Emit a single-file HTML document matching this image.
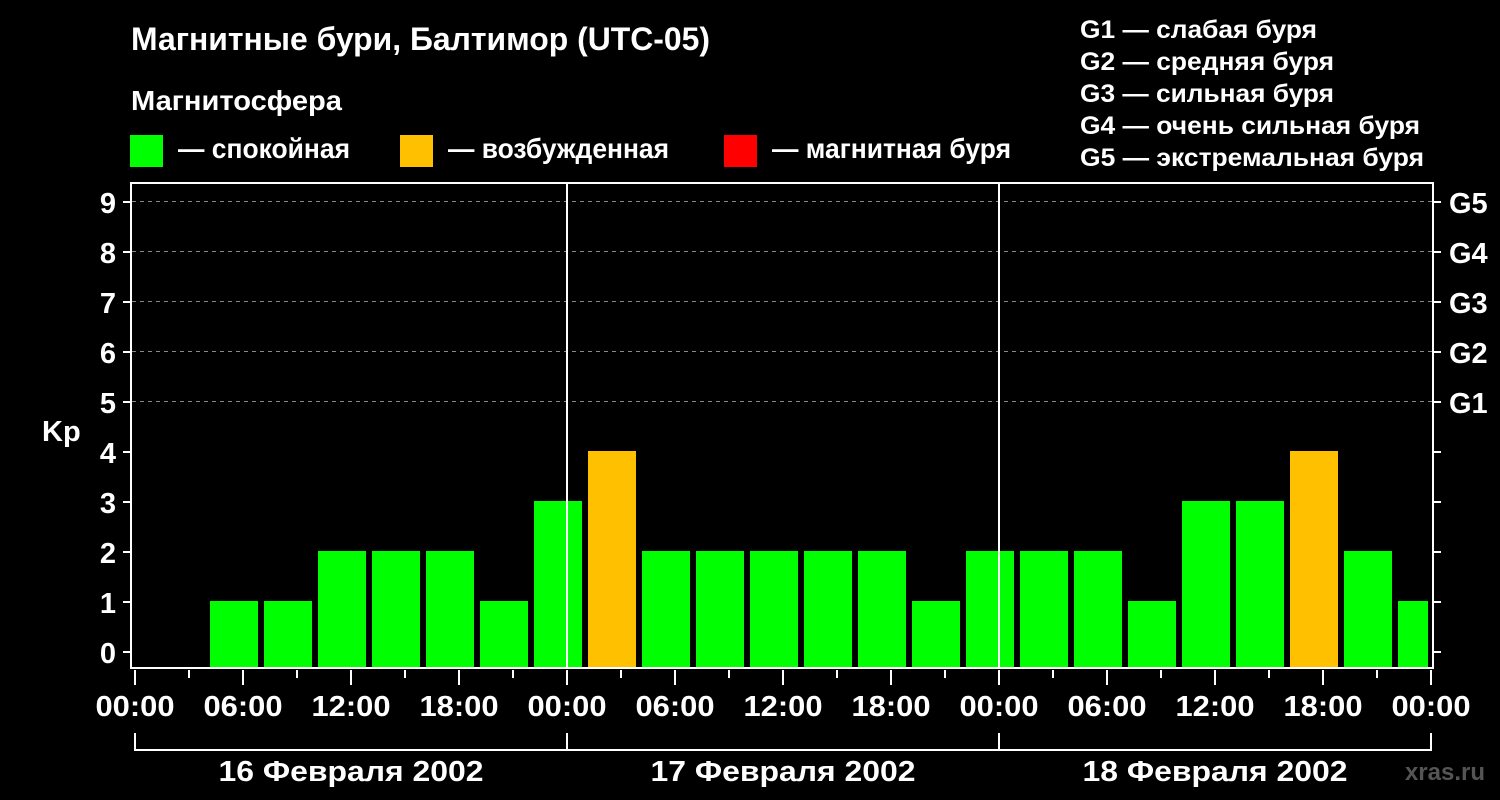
<!DOCTYPE html>
<html><head><meta charset="utf-8"><style>
html,body{margin:0;padding:0;background:#000;width:1500px;height:800px;overflow:hidden}
svg{display:block}
text{font-family:"Liberation Sans",Arial,sans-serif;font-weight:bold;fill:#fff}
</style></head><body>
<svg width="1500" height="800" viewBox="0 0 1500 800" xmlns="http://www.w3.org/2000/svg">
<rect width="1500" height="800" fill="#000"/>
<text x="131" y="50" font-size="32" textLength="579" lengthAdjust="spacingAndGlyphs">Магнитные бури, Балтимор (UTC-05)</text>
<text x="131" y="110" font-size="28" textLength="211" lengthAdjust="spacingAndGlyphs">Магнитосфера</text>
<rect x="130" y="135" width="33" height="32" fill="#00ff00"/>
<text x="178" y="158" font-size="28" textLength="172" lengthAdjust="spacingAndGlyphs">— спокойная</text>
<rect x="400" y="135" width="33" height="32" fill="#ffc000"/>
<text x="448" y="158" font-size="28" textLength="221" lengthAdjust="spacingAndGlyphs">— возбужденная</text>
<rect x="724" y="135" width="33" height="32" fill="#ff0000"/>
<text x="772" y="158" font-size="28" textLength="239" lengthAdjust="spacingAndGlyphs">— магнитная буря</text>
<g font-size="25">
<text x="1080" y="38" textLength="237" lengthAdjust="spacingAndGlyphs">G1 — слабая буря</text>
<text x="1080" y="70" textLength="254" lengthAdjust="spacingAndGlyphs">G2 — средняя буря</text>
<text x="1080" y="102" textLength="254" lengthAdjust="spacingAndGlyphs">G3 — сильная буря</text>
<text x="1080" y="134" textLength="340" lengthAdjust="spacingAndGlyphs">G4 — очень сильная буря</text>
<text x="1080" y="166" textLength="344" lengthAdjust="spacingAndGlyphs">G5 — экстремальная буря</text>
</g>
<g stroke="#888" stroke-width="1" stroke-dasharray="4,4">
<line x1="132" y1="201.5" x2="1432" y2="201.5"/>
<line x1="132" y1="251.5" x2="1432" y2="251.5"/>
<line x1="132" y1="301.5" x2="1432" y2="301.5"/>
<line x1="132" y1="351.5" x2="1432" y2="351.5"/>
<line x1="132" y1="401.5" x2="1432" y2="401.5"/>
</g>
<g fill="#00ff00">
<rect x="210" y="601" width="48" height="67"/>
<rect x="264" y="601" width="48" height="67"/>
<rect x="318" y="551" width="48" height="117"/>
<rect x="372" y="551" width="48" height="117"/>
<rect x="426" y="551" width="48" height="117"/>
<rect x="480" y="601" width="48" height="67"/>
<rect x="534" y="501" width="48" height="167"/>
<rect x="642" y="551" width="48" height="117"/>
<rect x="696" y="551" width="48" height="117"/>
<rect x="750" y="551" width="48" height="117"/>
<rect x="804" y="551" width="48" height="117"/>
<rect x="858" y="551" width="48" height="117"/>
<rect x="912" y="601" width="48" height="67"/>
<rect x="966" y="551" width="48" height="117"/>
<rect x="1020" y="551" width="48" height="117"/>
<rect x="1074" y="551" width="48" height="117"/>
<rect x="1128" y="601" width="48" height="67"/>
<rect x="1182" y="501" width="48" height="167"/>
<rect x="1236" y="501" width="48" height="167"/>
<rect x="1344" y="551" width="48" height="117"/>
<rect x="1398" y="601" width="30" height="67"/>
</g>
<g fill="#ffc000">
<rect x="588" y="451" width="48" height="217"/>
<rect x="1290" y="451" width="48" height="217"/>
</g>
<g stroke="#fff" stroke-width="2" fill="none">
<rect x="131" y="183" width="1302" height="485"/>
<line x1="567" y1="183" x2="567" y2="668"/>
<line x1="999" y1="183" x2="999" y2="668"/>
</g>
<g stroke="#fff" stroke-width="2">
<line x1="123" y1="652" x2="131" y2="652"/><line x1="123" y1="602" x2="131" y2="602"/>
<line x1="123" y1="552" x2="131" y2="552"/><line x1="123" y1="502" x2="131" y2="502"/>
<line x1="123" y1="452" x2="131" y2="452"/><line x1="123" y1="402" x2="131" y2="402"/>
<line x1="123" y1="352" x2="131" y2="352"/><line x1="123" y1="302" x2="131" y2="302"/>
<line x1="123" y1="252" x2="131" y2="252"/><line x1="123" y1="202" x2="131" y2="202"/>
<line x1="1433" y1="652" x2="1441" y2="652"/><line x1="1433" y1="602" x2="1441" y2="602"/>
<line x1="1433" y1="552" x2="1441" y2="552"/><line x1="1433" y1="502" x2="1441" y2="502"/>
<line x1="1433" y1="452" x2="1441" y2="452"/><line x1="1433" y1="402" x2="1441" y2="402"/>
<line x1="1433" y1="352" x2="1441" y2="352"/><line x1="1433" y1="302" x2="1441" y2="302"/>
<line x1="1433" y1="252" x2="1441" y2="252"/><line x1="1433" y1="202" x2="1441" y2="202"/>
</g>
<g font-size="29" text-anchor="end">
<text x="116" y="663">0</text><text x="116" y="613">1</text><text x="116" y="563">2</text>
<text x="116" y="513">3</text><text x="116" y="463">4</text><text x="116" y="413">5</text>
<text x="116" y="363">6</text><text x="116" y="313">7</text><text x="116" y="263">8</text>
<text x="116" y="213">9</text>
</g>
<text x="42" y="441" font-size="29">Kp</text>
<g font-size="29">
<text x="1449" y="213">G5</text><text x="1449" y="263">G4</text><text x="1449" y="313">G3</text>
<text x="1449" y="363">G2</text><text x="1449" y="413">G1</text>
</g>
<g stroke="#fff" stroke-width="2">
<line x1="135" y1="670" x2="135" y2="685"/><line x1="189" y1="670" x2="189" y2="678"/>
<line x1="243" y1="670" x2="243" y2="685"/><line x1="297" y1="670" x2="297" y2="678"/>
<line x1="351" y1="670" x2="351" y2="685"/><line x1="405" y1="670" x2="405" y2="678"/>
<line x1="459" y1="670" x2="459" y2="685"/><line x1="513" y1="670" x2="513" y2="678"/>
<line x1="567" y1="670" x2="567" y2="685"/><line x1="621" y1="670" x2="621" y2="678"/>
<line x1="675" y1="670" x2="675" y2="685"/><line x1="729" y1="670" x2="729" y2="678"/>
<line x1="783" y1="670" x2="783" y2="685"/><line x1="837" y1="670" x2="837" y2="678"/>
<line x1="891" y1="670" x2="891" y2="685"/><line x1="945" y1="670" x2="945" y2="678"/>
<line x1="999" y1="670" x2="999" y2="685"/><line x1="1053" y1="670" x2="1053" y2="678"/>
<line x1="1107" y1="670" x2="1107" y2="685"/><line x1="1161" y1="670" x2="1161" y2="678"/>
<line x1="1215" y1="670" x2="1215" y2="685"/><line x1="1269" y1="670" x2="1269" y2="678"/>
<line x1="1323" y1="670" x2="1323" y2="685"/><line x1="1377" y1="670" x2="1377" y2="678"/>
<line x1="1431" y1="670" x2="1431" y2="685"/>
<path d="M135 733V750H1431V733M567 733V750M999 733V750" fill="none"/>
</g>
<g font-size="29" text-anchor="middle">
<text x="135" y="716" textLength="79" lengthAdjust="spacingAndGlyphs">00:00</text><text x="243" y="716" textLength="79" lengthAdjust="spacingAndGlyphs">06:00</text><text x="351" y="716" textLength="79" lengthAdjust="spacingAndGlyphs">12:00</text>
<text x="459" y="716" textLength="79" lengthAdjust="spacingAndGlyphs">18:00</text><text x="567" y="716" textLength="79" lengthAdjust="spacingAndGlyphs">00:00</text><text x="675" y="716" textLength="79" lengthAdjust="spacingAndGlyphs">06:00</text>
<text x="783" y="716" textLength="79" lengthAdjust="spacingAndGlyphs">12:00</text><text x="891" y="716" textLength="79" lengthAdjust="spacingAndGlyphs">18:00</text><text x="999" y="716" textLength="79" lengthAdjust="spacingAndGlyphs">00:00</text>
<text x="1107" y="716" textLength="79" lengthAdjust="spacingAndGlyphs">06:00</text><text x="1215" y="716" textLength="79" lengthAdjust="spacingAndGlyphs">12:00</text><text x="1323" y="716" textLength="79" lengthAdjust="spacingAndGlyphs">18:00</text>
<text x="1431" y="716" textLength="79" lengthAdjust="spacingAndGlyphs">00:00</text>
<text x="351" y="781" textLength="265" lengthAdjust="spacingAndGlyphs">16 Февраля 2002</text>
<text x="783" y="781" textLength="265" lengthAdjust="spacingAndGlyphs">17 Февраля 2002</text>
<text x="1215" y="781" textLength="265" lengthAdjust="spacingAndGlyphs">18 Февраля 2002</text>
</g>
<text x="1485" y="780" font-size="24" text-anchor="end" style="fill:#555">xras.ru</text>
</svg>
</body></html>
